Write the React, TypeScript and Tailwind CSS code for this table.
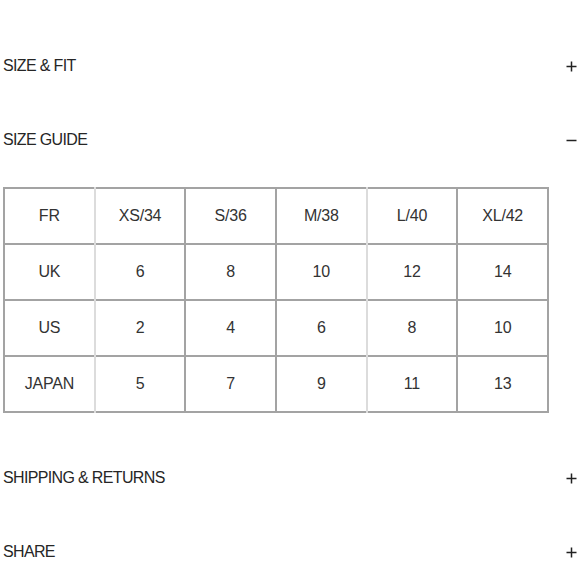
import React from 'react';

const sizes = [
  ['FR', 'XS/34', 'S/36', 'M/38', 'L/40', 'XL/42'],
  ['UK', '6', '8', '10', '12', '14'],
  ['US', '2', '4', '6', '8', '10'],
  ['JAPAN', '5', '7', '9', '11', '13'],
];

const PlusIcon = () => (
  <svg width="11" height="11" viewBox="0 0 11 11" className="text-[#222]">
    <path d="M5.5 0.5v10M0.5 5.5h10" stroke="currentColor" strokeWidth="1.5" fill="none" />
  </svg>
);

const MinusIcon = () => (
  <svg width="11" height="11" viewBox="0 0 11 11" className="text-[#222]">
    <path d="M0.5 5.5h10" stroke="currentColor" strokeWidth="1.5" fill="none" />
  </svg>
);

const Row: React.FC<{ title: string; open?: boolean }> = ({ title, open }) => (
  <div className="flex h-[74px] items-center justify-between pl-[3px] pr-[3px]">
    <span className="text-[16px] tracking-[-0.65px] text-[#262626]">{title}</span>
    {open ? <MinusIcon /> : <PlusIcon />}
  </div>
);

const lightCols = [1, 4];

export default function App() {
  return (
    <div
      className="min-h-[580px] w-[580px] bg-white pt-[29px]"
      style={{ fontFamily: '"Liberation Sans", Arial, sans-serif' }}
    >
      <Row title="SIZE & FIT" />
      <Row title="SIZE GUIDE" open />
      <div className="pl-[3px] pt-[10px]">
        <table className="w-[546px] table-fixed border-collapse border-2 border-[#a3a3a3] text-[16px] tracking-[-0.2px] text-[#333]">
          <tbody>
            {sizes.map((row, r) => (
              <tr key={r} className="h-[56px] border-t-2 border-[#a3a3a3]">
                {row.map((cell, c) => (
                  <td
                    key={c}
                    className={`text-center align-middle ${
                      c === 0
                        ? ''
                        : lightCols.includes(c)
                        ? 'border-l-2 border-[#dcdcdc]'
                        : 'border-l-2 border-[#a3a3a3]'
                    }`}
                  >
                    {cell}
                  </td>
                ))}
              </tr>
            ))}
          </tbody>
        </table>
      </div>
      <div className="pt-[28px]">
        <Row title="SHIPPING & RETURNS" />
        <Row title="SHARE" />
      </div>
    </div>
  );
}
